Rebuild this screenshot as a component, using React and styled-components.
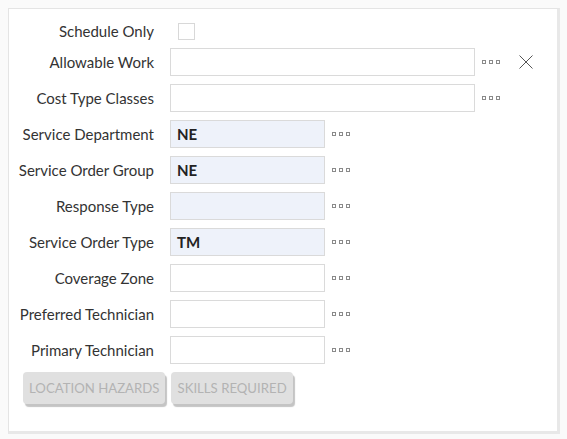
import styled, { createGlobalStyle } from "styled-components";

const GlobalStyle = createGlobalStyle`
  html, body {
    margin: 0;
    padding: 0;
    background: #fafafa;
    font-family: Lato, "Open Sans", sans-serif;
  }
  body {
    padding: 8px;
  }
`;

const fields = [
  { label: "Allowable Work", wide: true, clear: true },
  { label: "Cost Type Classes", wide: true },
  { label: "Service Department", value: "NE", filled: true },
  { label: "Service Order Group", value: "NE", filled: true },
  { label: "Response Type", filled: true },
  { label: "Service Order Type", value: "TM", filled: true },
  { label: "Coverage Zone" },
  { label: "Preferred Technician" },
  { label: "Primary Technician" },
];

const Dots = () => (
  <DotsBtn>
    <svg width="18" height="5" viewBox="0 0 18 5">
      {[0, 7, 14].map((x) => (
        <rect key={x} x={x + 0.5} y="0.5" width="3" height="3" fill="none" stroke="#8a8a8a" strokeWidth="1" />
      ))}
    </svg>
  </DotsBtn>
);

const Clear = () => (
  <ClearBtn>
    <svg width="14" height="14" viewBox="0 0 14 14">
      <path d="M0.5 0.5 L13.5 13.5 M13.5 0.5 L0.5 13.5" stroke="#555" strokeWidth="1" fill="none" />
    </svg>
  </ClearBtn>
);

const App = () => {
  return (
    <>
      <GlobalStyle />
      <Panel>
        <Form>
          <Label>Schedule Only</Label>
          <Control>
            <Checkbox />
          </Control>

          {fields.map((f) => (
            <Row key={f.label}>
              <Label>{f.label}</Label>
              <Control>
                <Input $wide={f.wide} $filled={f.filled}>
                  {f.value}
                </Input>
                <Dots />
                {f.clear && <Clear />}
              </Control>
            </Row>
          ))}
        </Form>

        <Buttons>
          <ActionButton disabled>LOCATION HAZARDS</ActionButton>
          <ActionButton disabled>SKILLS REQUIRED</ActionButton>
        </Buttons>
      </Panel>
    </>
  );
};

export default App;

const Panel = styled.div`
  box-sizing: border-box;
  width: 552px;
  height: 426px;
  background: #fff;
  border-top: 1px solid #e4e4e4;
  border-left: 1px solid #e4e4e4;
  border-right: 3px solid #e8e8e8;
  border-bottom: 3px solid #e8e8e8;
  padding-top: 13px;
`;

const Form = styled.div`
  display: grid;
  grid-template-columns: 145px 1fr;
  column-gap: 16px;
  row-gap: 8px;
  align-items: center;
`;

const Row = styled.div`
  display: contents;
`;

const Label = styled.div`
  text-align: right;
  font-size: 15px;
  color: #333;
  white-space: nowrap;
`;

const Control = styled.div`
  display: flex;
  align-items: center;
  height: 100%;
  min-height: 17px;
`;

const Checkbox = styled.div`
  width: 15px;
  height: 15px;
  margin-left: 8px;
  border: 1px solid #d8d8d8;
  background: #fff;
`;

const Input = styled.div`
  box-sizing: border-box;
  width: ${(p) => (p.$wide ? "305px" : "155px")};
  height: 28px;
  border: 1px solid #dadada;
  background: ${(p) => (p.$filled ? "#eef2fa" : "#fff")};
  padding: 0 6px;
  display: flex;
  align-items: center;
  font-size: 15px;
  font-weight: 700;
  color: #222;
`;

const DotsBtn = styled.span`
  display: flex;
  margin-left: 7px;
  line-height: 0;
`;

const ClearBtn = styled.span`
  display: flex;
  margin-left: 19px;
  line-height: 0;
`;

const Buttons = styled.div`
  display: flex;
  gap: 6px;
  padding-left: 14px;
  margin-top: 8px;
`;

const ActionButton = styled.button`
  height: 32px;
  padding: 0 6px;
  border: none;
  border-radius: 4px;
  background: #e0e0e0;
  box-shadow: 2px 3px 1px #c4c4c4;
  color: #b3b3b3;
  font-family: Lato, sans-serif;
  font-size: 13.2px;
  cursor: default;
`;
